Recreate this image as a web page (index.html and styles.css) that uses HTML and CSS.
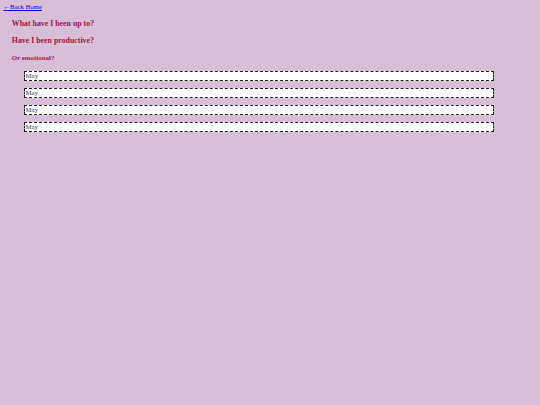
FILE: index.html
```html
<!DOCTYPE html>
<html>
<head>
<meta charset="utf-8">
<link rel="stylesheet" href="styles.css">
</head>
<body>
<a class="back" href="#">←Back Home</a>
<h3 class="title">What have I been up to?</h3>
<h3 class="title">Have I been productive?</h3>
<h4 class="subtitle">Or emotional?</h4>
<div class="entries">
  <div class="entry">May</div>
  <div class="entry">May</div>
  <div class="entry">May</div>
  <div class="entry">May</div>
</div>
</body>
</html>
```
FILE: styles.css
```css
html, body {
  background: #d8bfd8;
}
body {
  margin: 0;
  padding: 3.4px;
  font-family: "Liberation Serif", "Times New Roman", serif;
  font-size: 6.72px;
}
.back {
  color: #0000ee;
  font-size: 6.72px;
  line-height: 7.6px;
  display: inline-block;
}
.title {
  font-size: 7.86px;
  line-height: 9px;
  margin: 7.86px 0 7.86px 8.4px;
  color: #9e1648;
}
.subtitle {
  font-size: 6.9px;
  line-height: 7.7px;
  margin: 8.9px 0 9.6px 8.4px;
  color: #9e1648;
}
.entries {
  display: flex;
  flex-direction: column;
  gap: 7px;
  margin-left: 20.6px;
  width: 470px;
}
.entry {
  box-sizing: border-box;
  height: 10px;
  border: 1px dashed #222;
  background: #fff;
  color: #444;
  font-size: 6.9px;
  line-height: 7.8px;
  padding-left: 0.5px;
}
```
